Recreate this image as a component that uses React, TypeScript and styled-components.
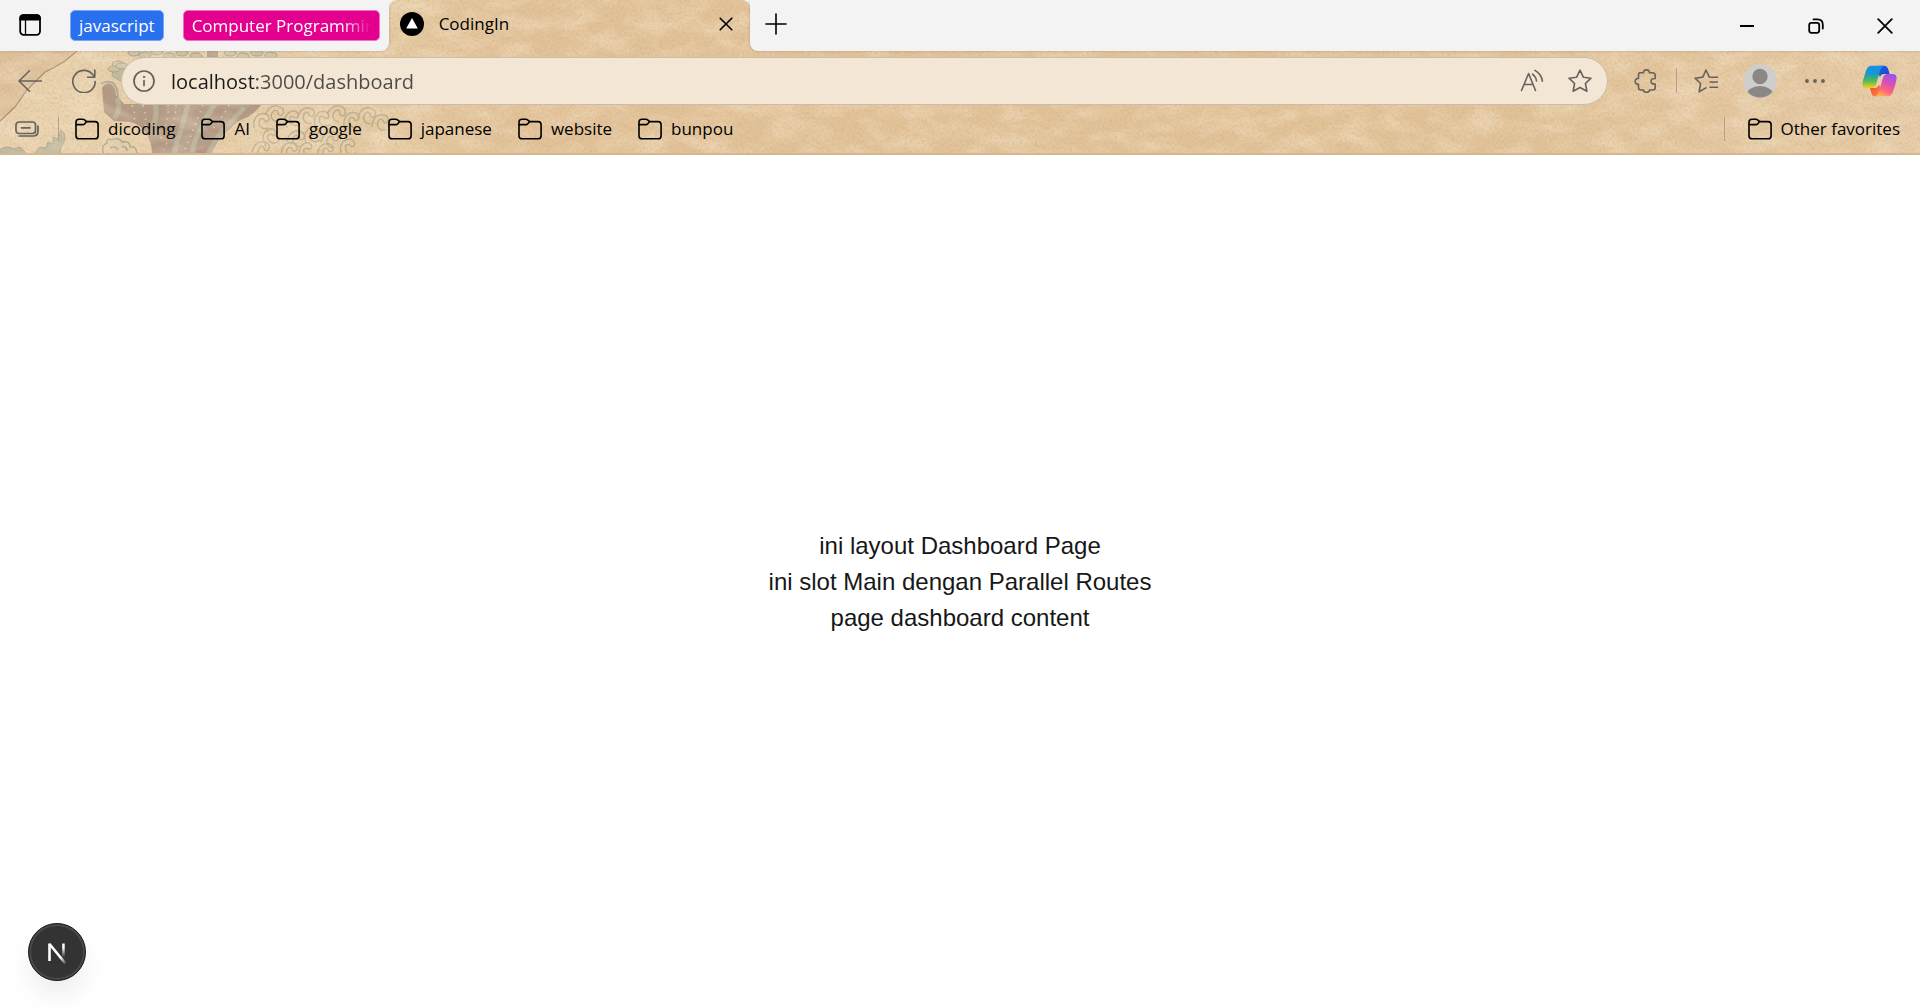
import React from "react";
import styled, { createGlobalStyle } from "styled-components";

const Global = createGlobalStyle`
  *, *::before, *::after { box-sizing: border-box; }
  html, body { margin: 0; padding: 0; }
  body {
    background: #ffffff;
    color: #000;
    font-family: "Open Sans", "Noto Sans", sans-serif;
  }
  button, input { font: inherit; color: inherit; margin: 0; }
`;

const Window = styled.div`
  min-height: 100vh;
  display: flex;
  flex-direction: column;
`;

const Chrome = styled.header`
  position: relative;
  isolation: isolate;
  background: #e5c8a0;
  border-bottom: 2px solid #d6b68c;
`;

const Artwork = styled.svg`
  position: absolute;
  inset: 0;
  width: 100%;
  height: 100%;
  z-index: -1;
`;

const TabStrip = styled.div`
  display: flex;
  align-items: stretch;
  height: 51px;
`;

const StripLeft = styled.div`
  display: flex;
  align-items: center;
  padding: 0 9px 0 18px;
  background: #f3f3f3;
  border-bottom-right-radius: 8px;
  box-shadow: 0 0 3px rgba(0, 0, 0, 0.2);
`;

const StripRight = styled.div`
  flex: 1;
  display: flex;
  align-items: center;
  padding: 0 27px 4px 15px;
  background: #f3f3f3;
  border-bottom-left-radius: 8px;
  box-shadow: 0 0 3px rgba(0, 0, 0, 0.2);
`;

const IconButton = styled.button`
  display: flex;
  align-items: center;
  justify-content: center;
  flex: none;
  padding: 0;
  border: 0;
  background: none;
  color: inherit;
`;

const GroupChip = styled.button<{ $color: string; $edge: string; $gap: number }>`
  max-width: 197px;
  height: 31px;
  margin-left: ${(p) => p.$gap}px;
  padding: 0 8px;
  border: 1px solid ${(p) => p.$edge};
  border-radius: 5px;
  background: ${(p) => p.$color};
  color: #fff;
  font-size: 17px;
  line-height: 28px;
  text-align: left;
`;

const ChipText = styled.span<{ $fade?: boolean }>`
  display: block;
  overflow: ${(p) => (p.$fade ? "hidden" : "visible")};
  white-space: nowrap;
  mask-image: ${(p) => (p.$fade ? "linear-gradient(90deg, #000 84%, transparent)" : "none")};
`;

const TabSlot = styled.div`
  flex: 0 1 361px;
  overflow: hidden;
`;

const Tab = styled.div`
  display: flex;
  align-items: center;
  height: 100%;
  padding: 0 17px 3px 11px;
  border-radius: 8px 8px 0 0;
  box-shadow: 0 0 0 8px #f3f3f3;
`;

const TabTitle = styled.span`
  flex: 1;
  margin-left: 15px;
  font-size: 17px;
  line-height: 24px;
`;

const WindowControls = styled.div`
  display: flex;
  gap: 53px;
  margin-left: auto;
  padding-top: 4px;
`;

const Toolbar = styled.div`
  display: flex;
  align-items: center;
  padding: 6px 23px 0 18px;
  color: #66625c;
`;

const NavButtons = styled.div`
  display: flex;
  gap: 30px;
  margin-right: 25px;
`;

const AddressBar = styled.div`
  flex: 1;
  display: flex;
  align-items: center;
  height: 48px;
  padding: 0 15px 0 11px;
  border: 1px solid #c9bdac;
  border-radius: 24px;
  background: #f3e6d5;
`;

const AddressInput = styled.input`
  flex: 1;
  min-width: 0;
  margin: 0 16px;
  padding: 2px 0 0;
  border: 0;
  outline: 0;
  font-size: 20px;
  line-height: 30px;
  color: transparent;
  background: linear-gradient(90deg, #1c1b1a 86px, #4e4a45 86px);
  background-clip: text;
`;

const AddressActions = styled.div`
  display: flex;
  gap: 24px;
`;

const ToolbarActions = styled.div`
  display: flex;
  align-items: center;
  margin-left: 26px;
`;

const ToolItem = styled(IconButton)<{ $gap: number }>`
  margin-left: ${(p) => p.$gap}px;
`;

const Divider = styled.span<{ $before: number; $after: number }>`
  width: 1px;
  height: 24px;
  margin: 0 ${(p) => p.$after}px 0 ${(p) => p.$before}px;
  background: #b5a084;
`;

const FavoritesBar = styled.nav`
  display: flex;
  align-items: center;
  height: 48px;
  padding: 0 20px 0 15px;
`;

const FavoritesList = styled.div`
  display: flex;
  flex: 1;
  gap: 26px;
`;

const Favorite = styled.button`
  display: flex;
  align-items: center;
  gap: 9px;
  padding: 0;
  border: 0;
  background: none;
  font-size: 17px;
  line-height: 24px;
  white-space: nowrap;
`;

const Page = styled.main`
  flex: 1;
  display: flex;
  flex-direction: column;
  align-items: center;
  justify-content: center;
  color: #171717;
  font-family: "Liberation Sans", Arial, sans-serif;
  font-size: 24px;
  line-height: 36px;
`;

const Line = styled.p`
  margin: 0;
`;

const DevButton = styled.button`
  position: fixed;
  left: 28px;
  bottom: 27px;
  width: 58px;
  height: 58px;
  display: flex;
  align-items: center;
  justify-content: center;
  padding: 0;
  border: 1px solid #171717;
  border-radius: 50%;
  background: #333;
  box-shadow: inset 0 0 0 2px #4a4a4a, 0 16px 32px -8px rgba(0, 0, 0, 0.13);
`;

type GlyphProps = { w: number; h?: number; sw?: number; children: React.ReactNode };

const Glyph = ({ w, h = w, sw = 1.6, children }: GlyphProps) => (
  <svg
    width={w}
    height={h}
    viewBox={`0 0 ${w} ${h}`}
    fill="none"
    stroke="currentColor"
    strokeWidth={sw}
    strokeLinecap="round"
    strokeLinejoin="round"
    aria-hidden="true"
  >
    {children}
  </svg>
);

const FolderIcon = () => (
  <Glyph w={24} h={22} sw={1.6}>
    <path d="M1 8V4Q1 1.2 4 1.2H7.6Q9 1.2 10 2.2L11.6 3.6H20Q23.1 3.6 23.1 6.7V17.7Q23.1 20.8 20 20.8H4.2Q1 20.8 1 17.7Z" />
    <path d="M1 6.6H7.8Q9 6.6 9.8 5.7L11.6 3.6" />
  </Glyph>
);

const CopilotIcon = () => (
  <svg width="35" height="32" viewBox="0 0 35 32" aria-hidden="true">
    <defs>
      <linearGradient id="cpA" x1="0" y1="0" x2="0" y2="1">
        <stop offset="0" stopColor="#1b8df0" />
        <stop offset=".35" stopColor="#1798c9" />
        <stop offset=".68" stopColor="#54b85c" />
        <stop offset="1" stopColor="#f4d010" />
      </linearGradient>
      <linearGradient id="cpB" x1=".7" y1="0" x2=".3" y2="1">
        <stop offset="0" stopColor="#9b52ee" />
        <stop offset=".4" stopColor="#dc4eb0" />
        <stop offset=".72" stopColor="#fb6480" />
        <stop offset="1" stopColor="#ffb050" />
      </linearGradient>
      <linearGradient id="cpC" x1="0" y1="0" x2="1" y2="1">
        <stop offset="0" stopColor="#1a62e0" />
        <stop offset="1" stopColor="#2346c4" />
      </linearGradient>
      <linearGradient id="cpD" x1="0" y1="0" x2="1" y2="1">
        <stop offset="0" stopColor="#ee4a2e" />
        <stop offset="1" stopColor="#ff8748" />
      </linearGradient>
    </defs>
    <path d="M17 .8H22.5Q25 .8 26 3.5L27.6 9H22Q19 9 18 12L16 8Z" fill="url(#cpC)" />
    <path d="M8 23H13.5Q16 22.5 17 19.5L19 25 16.5 31.2H13Q10.3 31.2 9.6 28.5Z" fill="url(#cpD)" />
    <path d="M10 .8H22Q19.300 1.6 18.300 5L14.200 19Q13 23 9.500 23H4.500Q0 23 .4 18.500Q.8 15 4.500 4.500Q6 .8 10 .8Z" fill="url(#cpA)" />
    <path d="M25.500 9H30.500Q35 9.200 34.600 13.500Q34 18 30.700 27.500Q29.400 31.200 25.500 31.200H13Q15.700 30.400 16.700 27L20.900 13Q22 9 25.500 9Z" fill="url(#cpB)" />
  </svg>
);

const claws: [number, number, number][] = [
  [262, 120, 0], [276, 112, 30], [292, 118, -20], [307, 114, 15], [322, 118, -10], [338, 112, 35],
  [352, 119, 0], [368, 114, 25], [381, 121, 10], [270, 136, -25], [297, 137, 20], [312, 134, -15],
  [331, 138, 20], [348, 146, -10], [290, 149, 10], [306, 150, -30], [326, 150, 5], [262, 148, 20],
];

const foam: [number, number][] = [
  [134, 53], [145, 55], [157, 52], [169, 56], [182, 53], [196, 56], [118, 64], [114, 69],
  [122, 66], [230, 53], [243, 56], [257, 53], [271, 55],
];

const WaveArtwork = () => (
  <Artwork aria-hidden="true">
    <defs>
      <linearGradient id="paper" x1="0" x2="1" y1="0" y2="0">
        <stop offset="0" stopColor="#e9d2ae" />
        <stop offset=".17" stopColor="#e6cda7" />
        <stop offset=".27" stopColor="#e2c298" />
        <stop offset=".8" stopColor="#e2c399" />
        <stop offset="1" stopColor="#e6cba6" />
      </linearGradient>
      <filter id="grain" x="0" y="0" width="100%" height="100%">
        <feTurbulence type="fractalNoise" baseFrequency=".4" numOctaves="3" seed="7" />
        <feColorMatrix values="0 0 0 0 .55  0 0 0 0 .38  0 0 0 0 .2  1.2 0 0 0 -.52" />
      </filter>
      <filter id="grainLight" x="0" y="0" width="100%" height="100%">
        <feTurbulence type="fractalNoise" baseFrequency=".03 .06" numOctaves="5" seed="21" />
        <feColorMatrix values="0 0 0 0 1  0 0 0 0 .91  0 0 0 0 .76  1.2 0 0 0 -.45" />
      </filter>
    </defs>
    <rect width="100%" height="100%" fill="url(#paper)" />
    <path d="M0 51H77L65 61 55 67 45 72 37 80 27 90 15 107 0 121Z" fill="#dec09a" />
    <path d="M77 51L65 61 55 67 45 72 37 80 27 90 15 107 0 121" fill="none" stroke="#a08b70" strokeWidth="1.2" />
    <g fill="#bfbba2" stroke="#a8a189" strokeWidth=".8">
      <path d="M34 154L40 147 46 148 48 142 53 144 53 137 58 139 61 130 65 134 64 142 61 147 60 154Z" />
      <path d="M0 154V149Q8 145 14 149L20 147 27 154Z" />
      <path d="M113 68Q112 61 120 64Q130 63 128 75L122 82 112 76Z" />
    </g>
    <path
      d="M102 88Q105 82 111 84Q116 88 116 95L124 104H262Q256 112 248 117Q236 121 231 128L221 136 207 154H152Q152 143 147 135Q141 124 130 122L114 121 104 112Z"
      fill="#a8917f"
      opacity=".88"
    />
    <path d="M101 84Q106 80 113 83Q118 88 118 97" fill="none" stroke="#b2aa92" strokeWidth="2" />
    <g fill="none" stroke="#b8b09a" strokeWidth="5">
      <path d="M117 98Q122 109 114 119" />
      <path d="M155 104Q158 114 153 126" />
      <path d="M188 104Q184 120 181 130Q176 142 174 154" />
      <path d="M215 104Q208 114 202 126Q194 140 192 154" />
      <path d="M244 108Q236 116 228 126Q218 134 208 154" />
    </g>
    <g fill="none" stroke="#dcc9ac" strokeWidth="1.6" strokeDasharray="1.6 5">
      <path d="M132 105Q136 115 134 121" />
      <path d="M143 105Q147 119 145 126" />
      <path d="M168 105Q170 119 160 140" />
      <path d="M176 105Q176 121 164 150" />
      <path d="M203 105Q196 123 184 152" />
      <path d="M229 105Q222 119 212 130" />
    </g>
    <g fill="#e2cfae" stroke="#a8a189" strokeWidth="1.3">
      <path d="M104 154Q100 146 107 143Q106 138 112 140Q118 136 122 142Q130 140 130 147Q136 145 137 154" />
      <path d="M110 148Q116 145 118 150M122 147Q127 146 127 151" fill="none" />
    </g>
    <g fill="#cdc3a5" stroke="#a39a81" strokeWidth=".9">
      {foam.map(([x, y]) => (
        <ellipse key={`${x}-${y}`} cx={x} cy={y} rx="6" ry="3" />
      ))}
    </g>
    <rect x="207" y="51" width="11" height="6" fill="#a8917f" />
    <g fill="none" stroke="#b4a88a" strokeWidth="1.4" strokeLinecap="round" opacity=".9">
      {claws.map(([x, y, turn]) => (
        <path
          key={`${x}-${y}`}
          transform={`translate(${x} ${y}) rotate(${turn})`}
          d="M-8 7Q-9-3-2-6Q6-8 7-2Q7 2 3 1Q1-3-2-1Q-4 3-2 6Q1 10 6 8"
        />
      ))}
    </g>
    <rect width="100%" height="100%" filter="url(#grainLight)" opacity=".6" />
    <rect width="100%" height="100%" filter="url(#grain)" opacity=".7" />
  </Artwork>
);

const favorites = ["dicoding", "AI", "google", "japanese", "website", "bunpou"];

export default function App() {
  return (
    <Window>
      <Global />
      <Chrome>
        <WaveArtwork />
        <TabStrip>
          <StripLeft>
            <IconButton aria-label="Tab actions">
              <Glyph w={24} sw={1.8}>
                <rect x="2.2" y="1.2" width="19.800" height="19.600" rx="3.500" />
                <path d="M2.200 5.500V4.500Q2.200 1.200 5.500 1.200H18.700Q22 1.200 22 4.500V5.500Z" fill="currentColor" />
                <path d="M7.500 6V20" strokeWidth="1.300" />
              </Glyph>
            </IconButton>
            <GroupChip $color="#2970ee" $edge="#7aa5f5" $gap={28}>
              <ChipText>javascript</ChipText>
            </GroupChip>
            <GroupChip $color="#e4008f" $edge="#f06fc0" $gap={19}>
              <ChipText $fade>Computer Programming</ChipText>
            </GroupChip>
          </StripLeft>
          <TabSlot>
            <Tab>
              <svg width="24" height="24" viewBox="0 0 24 24" aria-hidden="true">
                <circle cx="12" cy="12" r="12" fill="#000" />
                <path d="M12 6L17.800 16.500H6.200Z" fill="#fff" />
              </svg>
              <TabTitle>CodingIn</TabTitle>
              <IconButton aria-label="Close tab">
                <Glyph w={14} sw={1.6}>
                  <path d="M1.200 1.200L12.800 12.800M12.800 1.200L1.200 12.800" />
                </Glyph>
              </IconButton>
            </Tab>
          </TabSlot>
          <StripRight>
            <IconButton aria-label="New tab">
              <Glyph w={22} sw={1.6}>
                <path d="M11 1V21M1 11H21" />
              </Glyph>
            </IconButton>
            <WindowControls>
              <IconButton aria-label="Minimize">
                <Glyph w={16} sw={2}>
                  <path d="M1 8H15" strokeLinecap="butt" />
                </Glyph>
              </IconButton>
              <IconButton aria-label="Restore">
                <Glyph w={16} sw={1.8}>
                  <rect x="1.200" y="4.800" width="10" height="10" rx="2.200" />
                  <path d="M5.500 1.400H9.500Q14.800 1.400 14.800 6.700V10.500" />
                </Glyph>
              </IconButton>
              <IconButton aria-label="Close window">
                <Glyph w={16} sw={1.8}>
                  <path d="M1.200 1.200L14.800 14.800M14.800 1.200L1.200 14.800" />
                </Glyph>
              </IconButton>
            </WindowControls>
          </StripRight>
        </TabStrip>

        <Toolbar>
          <NavButtons>
            <IconButton aria-label="Back">
              <Glyph w={24}>
                <path d="M23.400 12H1M11.500 1.800L1 12L11.500 22.200" />
              </Glyph>
            </IconButton>
            <IconButton aria-label="Refresh">
              <Glyph w={24}>
                <path d="M23.200 12.500A11.200 11.200 0 1 1 20.500 5.300L22.600 8M22.800 1V8.200H15.600" />
              </Glyph>
            </IconButton>
          </NavButtons>
          <AddressBar>
            <IconButton aria-label="View site information">
              <Glyph w={22} sw={1.7}>
                <circle cx="11" cy="11" r="10" />
                <path d="M11 10.500V15.500" />
                <circle cx="11" cy="7" r=".7" fill="currentColor" strokeWidth="1" />
              </Glyph>
            </IconButton>
            <AddressInput aria-label="Address" defaultValue="localhost:3000/dashboard" />
            <AddressActions>
              <IconButton aria-label="Read aloud">
                <Glyph w={24}>
                  <path d="M1.500 21.500L8.600 4.500L15.500 21.500M4 15.500H13.100" />
                  <path d="M12.500 5.200Q16 7.800 16.500 12M15 1.400Q21.500 5.200 22.400 12.200" />
                </Glyph>
              </IconButton>
              <IconButton aria-label="Add to favorites">
                <Glyph w={24}>
                  <path d="M12 1.200L15.300 8.200L23 9.200L17.400 14.500L18.900 22.200L12 18.500L5.100 22.200L6.600 14.500L1 9.200L8.700 8.200Z" />
                </Glyph>
              </IconButton>
            </AddressActions>
          </AddressBar>
          <ToolbarActions>
            <IconButton aria-label="Extensions">
              <Glyph w={24}>
                <path d="M6 3.800H9.500Q9.300.9 12.500.9Q15.600.9 15.400 3.800H18.500Q21.200 3.800 21.200 6.500V9.500Q17 9.200 17 12.300Q17 15.300 21.200 15V18.500Q21.200 21 18.500 21H15.400Q15.600 23.300 12.500 23.300Q9.300 23.300 9.500 21H7Q4.500 21 4.500 18.500V15.200Q1.200 15.400 1.200 12.300Q1.200 9.200 4.500 9.400V6.300Q4.500 3.800 6 3.800Z" />
              </Glyph>
            </IconButton>
            <Divider $before={18} $after={17} />
            <IconButton aria-label="Favorites">
              <Glyph w={24}>
                <path d="M16 8.200L15.200 8L12 1L8.800 8.100L1 9.200L6.600 14.500L5.100 22.800L12 18.900" />
                <path d="M17 8.200H23.500M16 13H23.500M16 18.200H23.500" />
              </Glyph>
            </IconButton>
            <ToolItem $gap={25} aria-label="Profile">
              <svg width="34" height="34" viewBox="0 0 34 34" aria-hidden="true">
                <defs>
                  <clipPath id="avatarClip">
                    <circle cx="17" cy="17" r="16.500" />
                  </clipPath>
                </defs>
                <circle cx="17" cy="17" r="17" fill="#d0cecb" />
                <g clipPath="url(#avatarClip)" fill="#8b8785">
                  <circle cx="17" cy="12.500" r="7.700" />
                  <ellipse cx="17" cy="31.500" rx="13.500" ry="9.500" />
                </g>
              </svg>
            </ToolItem>
            <ToolItem $gap={27} aria-label="Settings and more">
              <Glyph w={22} h={8}>
                <g fill="currentColor" stroke="none">
                  <circle cx="3" cy="4" r="1.900" />
                  <circle cx="11" cy="4" r="1.900" />
                  <circle cx="19" cy="4" r="1.900" />
                </g>
              </Glyph>
            </ToolItem>
            <ToolItem $gap={36} aria-label="Copilot">
              <CopilotIcon />
            </ToolItem>
          </ToolbarActions>
        </Toolbar>

        <FavoritesBar aria-label="Favorites bar">
          <IconButton aria-label="Workspaces">
            <svg width="24" height="18" viewBox="0 0 24 18" fill="none" stroke="#66625c" strokeWidth="1.700" strokeLinecap="round" aria-hidden="true">
              <rect x="1" y="2" width="19.500" height="11.500" rx="3" />
              <path d="M6.500 7.800H15M4 16H18Q23 16 23 11V6" />
            </svg>
          </IconButton>
          <Divider $before={19} $after={16} />
          <FavoritesList>
            {favorites.map((name) => (
              <Favorite key={name}>
                <FolderIcon />
                {name}
              </Favorite>
            ))}
          </FavoritesList>
          <Divider $before={0} $after={23} />
          <Favorite>
            <FolderIcon />
            Other favorites
          </Favorite>
        </FavoritesBar>
      </Chrome>

      <Page>
        <Line>ini layout Dashboard Page</Line>
        <Line>ini slot Main dengan Parallel Routes</Line>
        <Line>page dashboard content</Line>
      </Page>

      <DevButton aria-label="Open Next.js Dev Tools">
        <svg width="20" height="24" viewBox="0 0 20 24" fill="none" strokeWidth="2.600" aria-hidden="true">
          <defs>
            <linearGradient id="nStem" x1="0" y1="0" x2="0" y2="1">
              <stop offset=".3" stopColor="#fff" />
              <stop offset="1" stopColor="#fff" stopOpacity="0" />
            </linearGradient>
            <linearGradient id="nDiag" x1="0" y1="0" x2="1" y2="1">
              <stop offset=".7" stopColor="#fff" />
              <stop offset="1" stopColor="#fff" stopOpacity=".1" />
            </linearGradient>
          </defs>
          <path d="M2.500 21V3.500" stroke="#fff" />
          <path d="M2.500 4L18.500 23.500" stroke="url(#nDiag)" />
          <rect x="15.200" y="3.500" width="2.500" height="14" fill="url(#nStem)" />
        </svg>
      </DevButton>
    </Window>
  );
}
